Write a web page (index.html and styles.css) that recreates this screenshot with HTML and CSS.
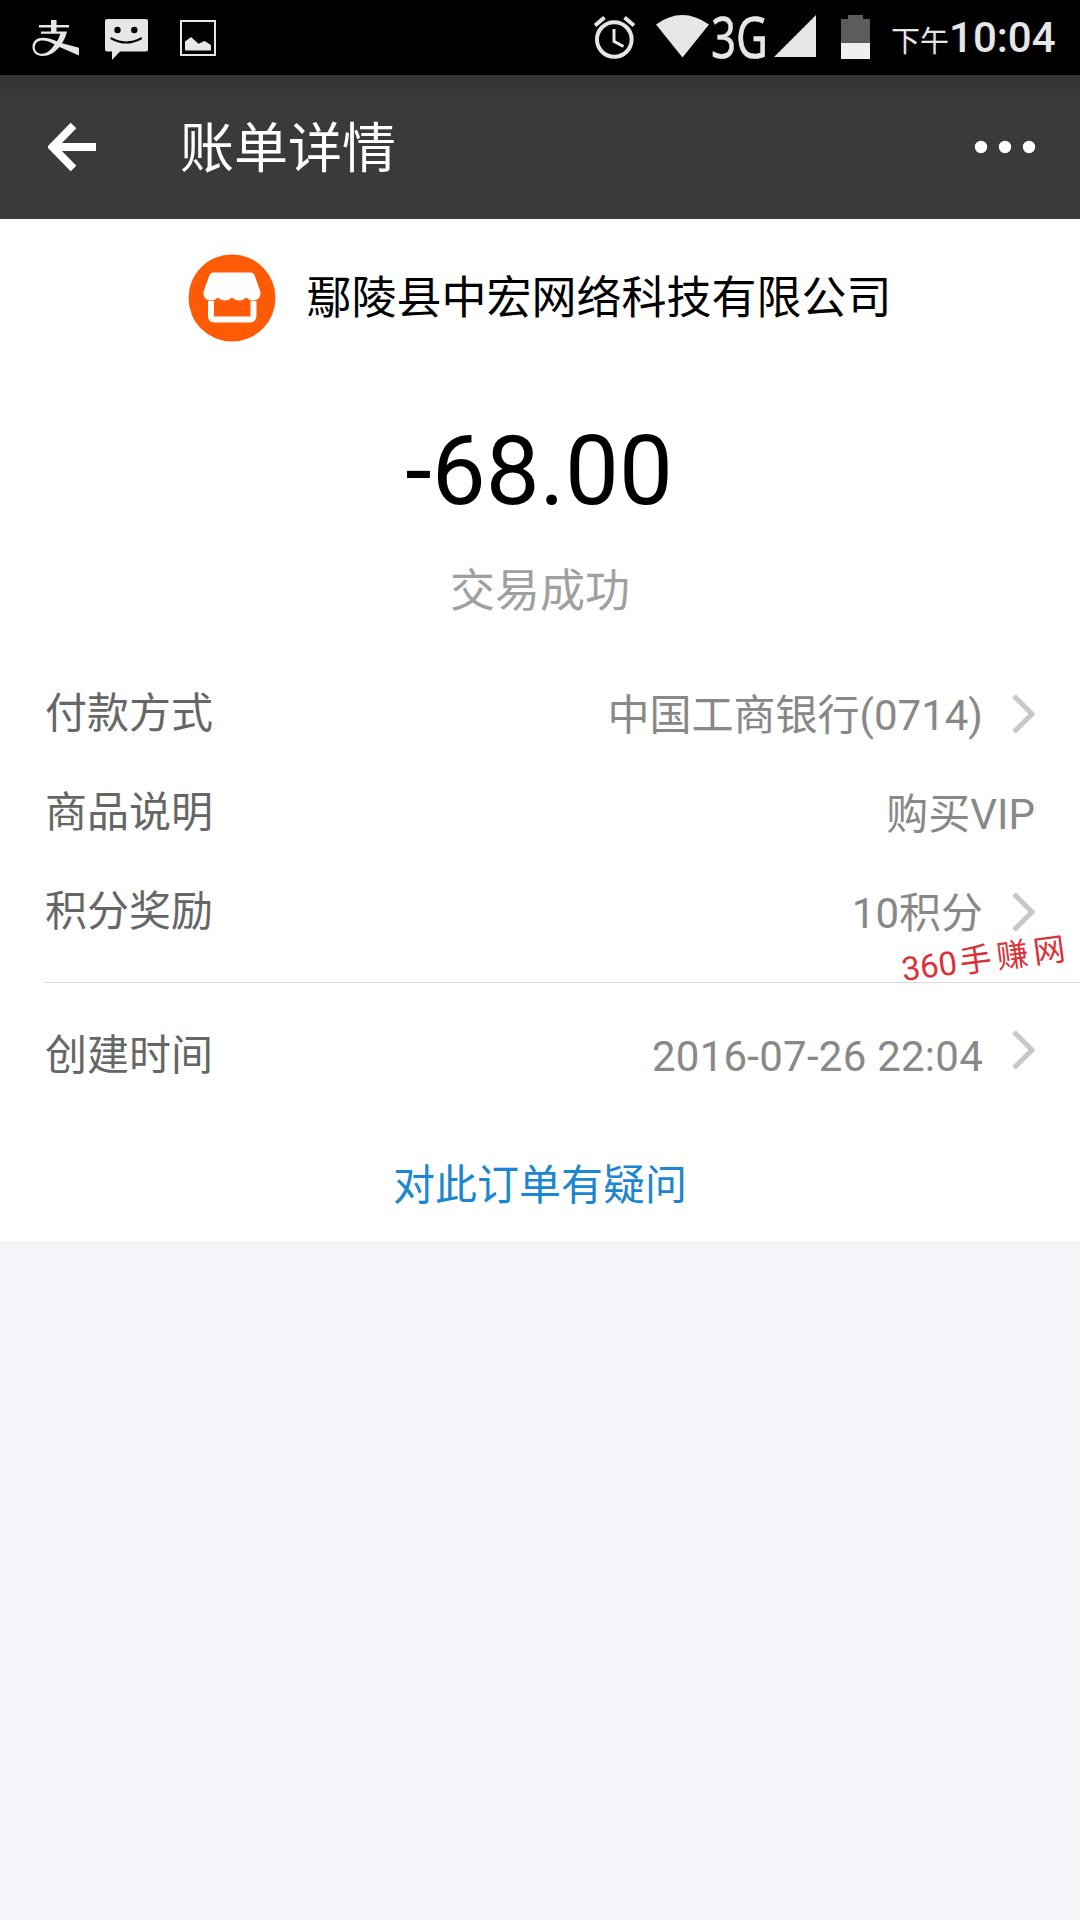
FILE: index.html
```html
<!DOCTYPE html>
<html lang="zh-CN">
<head>
<meta charset="utf-8">
<title>账单详情</title>
<link rel="stylesheet" href="styles.css">
</head>
<body>
<div class="status-bar">
  <div class="notifications">
    <svg width="47" height="75" viewBox="32 0 47 75">
      <path fill="#e6e6e6" d="M39 25h12v-5h5.500v5h12.500v2.400H56.500V31.400h10.500C66 36 64 40 62 43.300L79 47.700V55.500L59.500 47C54 53 49 56 42.500 56C36 56 32.500 52 32.500 47C32.500 41 37 37.800 43 37.800C48 37.800 52.500 39.500 57 41.300C58.500 39 59.500 36.500 60.200 33.700H41V31.400h10V27.400H39Z"/>
      <path fill="#000" d="M54.500 44.500C50 42 46.500 40.500 42.500 40.500C38 40.500 34.800 43 34.800 47.200C34.800 51 37.500 53.700 42 53.700C47 53.700 51.500 49.500 54.500 44.500Z"/>
    </svg>
    <svg width="43" height="75" viewBox="105 0 43 75">
      <path fill="#e6e6e6" d="M107 19h39q2 0 2 2v28.500q0 2-2 2h-26L112 60v-8.500h-5q-2 0-2-2V21q0-2 2-2Z"/>
      <circle cx="117.500" cy="30" r="3.200"/><circle cx="134.300" cy="30" r="3.200"/>
      <path d="M111.500 38.500Q126 46.500 141 38.500" fill="none" stroke="#000" stroke-width="2.200" stroke-linecap="round"/>
    </svg>
    <svg width="36" height="75" viewBox="180 0 36 75">
      <rect x="181" y="21" width="34" height="34" fill="none" stroke="#e6e6e6" stroke-width="2"/>
      <path fill="#e6e6e6" d="M185 50.500V41.500L191 37L198.500 43.700L204.500 41L211 45V50.500Z"/>
    </svg>
  </div>
  <div class="indicators">
    <svg class="alarm" width="42" height="75" viewBox="594 0 42 75" fill="none" stroke="#e6e6e6">
      <circle cx="614.300" cy="39.500" r="17.300" stroke-width="4"/>
      <path stroke-width="3" d="M614 29V41.300L623.500 46.500"/>
      <path stroke-width="4" d="M595 25.500L604.500 17.500M624.500 17.500L634 25.500"/>
    </svg>
    <svg class="wifi" width="53" height="75" viewBox="656 0 53 75">
      <path fill="#e6e6e6" d="M656 24.500Q682 5.500 709 24.500L682.500 57.500Z"/>
    </svg>
    <svg class="network" width="58" height="75" viewBox="0 0 58 75">
      <text class="network-label" x="0" y="58" textLength="57" lengthAdjust="spacingAndGlyphs">3G</text>
    </svg>
    <svg class="signal" width="42" height="75" viewBox="774 0 42 75">
      <path fill="#e6e6e6" d="M774 57L816 15V57Z"/>
    </svg>
    <svg class="battery" width="29" height="75" viewBox="841 0 29 75">
      <path fill="#5c5c5c" d="M841 19h7v-4h15v4h7v24h-29Z"/>
      <path fill="#efefef" d="M841 43h29v16h-29Z"/>
    </svg>
    <div class="clock"><span class="clock-period">下午</span>10:04</div>
  </div>
</div>

<header class="app-bar">
  <svg class="back" width="48" height="50" viewBox="0 0 48 50" fill="none" stroke="#fff">
    <path stroke-width="8" d="M25.500 3.500L4.500 25L25.500 46.500M5 25H48"/>
  </svg>
  <h1 class="app-title">账单详情</h1>
  <svg class="more" width="62" height="14" viewBox="0 0 62 14" fill="#fff">
    <circle cx="7" cy="7" r="6.200"/><circle cx="31" cy="7" r="6.200"/><circle cx="55" cy="7" r="6.200"/>
  </svg>
</header>

<main class="bill">
  <div class="merchant">
    <svg width="88" height="88" viewBox="0 0 88 88">
      <circle cx="44" cy="44" r="43.500" fill="#ff5a05"/>
      <path fill="#fff" d="M25 18.500H63Q65.500 18.500 66.500 21L72.500 38Q73 46 65.500 46.500H64.500Q61 46.500 58.300 43.500Q55 46.500 51 46.500Q47 46.500 44 43.500Q41 46.500 37 46.500Q33 46.500 29.700 43.500Q27 46.500 23.500 46.500H22Q15 46 15.500 38L21.500 21Q22.500 18.500 25 18.500Z"/>
      <path fill="none" stroke="#fff" stroke-width="6" d="M23 47V62Q23 65.500 26.500 65.500H62Q65.500 65.500 65.500 62V47"/>
    </svg>
    <span class="merchant-name">鄢陵县中宏网络科技有限公司</span>
  </div>
  <div class="amount">-68.00</div>
  <div class="state">交易成功</div>

  <div class="group">
    <div class="row">
      <span class="label">付款方式</span>
      <span class="value">中国工商银行(0714)</span>
      <svg class="chevron" width="24" height="40" viewBox="0 0 24 40"><path d="M2 2L20 20L2 38"/></svg>
    </div>
    <div class="row">
      <span class="label">商品说明</span>
      <span class="value value-last">购买VIP</span>
    </div>
    <div class="row">
      <span class="label">积分奖励</span>
      <span class="value">10积分</span>
      <svg class="chevron" width="24" height="40" viewBox="0 0 24 40"><path d="M2 2L20 20L2 38"/></svg>
      <div class="watermark"><span class="watermark-number">360</span>手赚网</div>
    </div>
  </div>
  <div class="group group-time">
    <div class="row">
      <span class="label">创建时间</span>
      <span class="value value-time">2016-07-26 22:04</span>
      <svg class="chevron chevron-raised" width="24" height="40" viewBox="0 0 24 40"><path d="M2 2L20 20L2 38"/></svg>
    </div>
  </div>
  <a class="question">对此订单有疑问</a>
</main>
</body>
</html>
```
FILE: styles.css
```css
* {
  box-sizing: border-box;
}

body {
  margin: 0;
  min-height: 1920px;
  background: #f4f4f9;
  font-family: Roboto, "Noto Sans CJK SC", sans-serif;
  overflow-x: hidden;
}

svg {
  display: block;
  flex: none;
}

.status-bar {
  display: flex;
  justify-content: space-between;
  height: 75px;
  padding: 0 23px 0 32px;
  background: #000;
  color: #e6e6e6;
}

.notifications {
  display: flex;
}

.notifications svg + svg {
  margin-left: 26px;
}

.notifications svg:last-child {
  margin-left: 32px;
}

.indicators {
  display: flex;
}

.wifi {
  margin-left: 20px;
}

.network {
  margin-left: 2px;
}

.network-label {
  font-family: "Noto Sans", sans-serif;
  font-size: 56px;
  fill: #e6e6e6;
  stroke: #e6e6e6;
  stroke-width: 0.6px;
}

.signal {
  margin-left: 5px;
}

.battery {
  margin-left: 25px;
}

.clock {
  width: 166px;
  margin-left: 21px;
  font-size: 42px;
  font-weight: 500;
  line-height: 76px;
  white-space: nowrap;
}

.clock-period {
  font-size: 29px;
  font-weight: 400;
}

.app-bar {
  display: flex;
  align-items: center;
  height: 144px;
  padding: 0 44px 0 48px;
  background: linear-gradient(#333, #3a3a3a 24px);
  color: #fff;
}

.app-title {
  flex: 1;
  margin: 0;
  padding: 6px 0 0 84px;
  font-size: 54px;
  font-weight: 400;
  line-height: 72px;
}

.bill {
  display: flex;
  flex-direction: column;
  height: 1022px;
  background: #fff;
}

.merchant {
  display: flex;
  justify-content: center;
  align-items: center;
  gap: 30px;
  height: 158px;
  color: #000;
  font-size: 45px;
  line-height: 60px;
}

.merchant-name {
  padding-top: 2px;
}

.amount {
  height: 186px;
  padding: 1px 2px 0 0;
  color: #000;
  font-size: 96px;
  line-height: 186px;
  text-align: center;
}

.state {
  height: 101px;
  color: #a0a0a0;
  font-size: 45px;
  line-height: 58px;
  text-align: center;
}

.group {
  margin-left: 44px;
  padding: 0 44px 21px 1px;
  border-bottom: 1px solid #dcdcdc;
}

.group-time {
  padding-top: 23px;
  padding-bottom: 0;
  border-bottom: 0;
}

.row {
  position: relative;
  display: flex;
  align-items: center;
  height: 99px;
  font-size: 42px;
  line-height: 60px;
}

.label {
  color: #666;
}

.value {
  margin-left: auto;
  padding-top: 5px;
  color: #888;
}

.value-last {
  margin-right: 1px;
}

.value-time {
  padding-top: 2px;
  letter-spacing: 0.25px;
}

.chevron {
  margin-left: 29px;
  fill: none;
  stroke: #c8c8c8;
  stroke-width: 5;
}

.chevron-raised {
  margin-bottom: 12px;
}

.watermark {
  position: absolute;
  right: -35px;
  top: 77px;
  color: #dc2f36;
  font-size: 32px;
  line-height: 40px;
  letter-spacing: 5px;
  white-space: nowrap;
  transform: rotate(-7.5deg);
}

.watermark-number {
  font-size: 33px;
  letter-spacing: 0;
  margin-right: 3px;
}

.question {
  margin-top: 51px;
  color: #1c86d1;
  font-size: 42px;
  line-height: 60px;
  text-align: center;
}
```
